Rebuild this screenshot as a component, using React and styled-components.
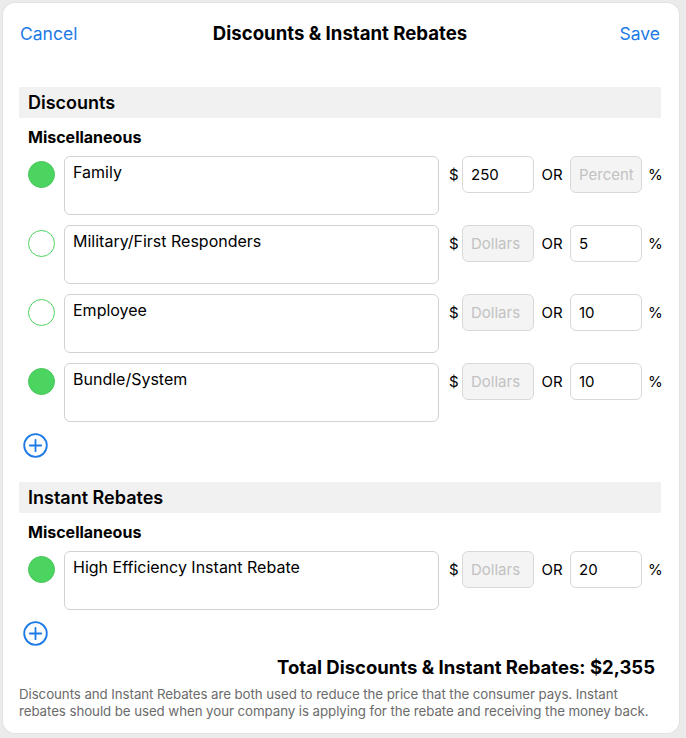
import React from 'react'
import styled, { createGlobalStyle } from 'styled-components'

const GlobalStyle = createGlobalStyle`
  body {
    margin: 0;
    background: #ebebeb;
    font-family: Inter, "Liberation Sans", sans-serif;
    color: #000;
  }
`

const discounts = [
    { name: 'Family', on: true, dollars: '250', percent: '' },
    { name: 'Military/First Responders', on: false, dollars: '', percent: '5' },
    { name: 'Employee', on: false, dollars: '', percent: '10' },
    { name: 'Bundle/System', on: true, dollars: '', percent: '10' },
]

const rebates = [
    { name: 'High Efficiency Instant Rebate', on: true, dollars: '', percent: '20' },
]

function PlusIcon() {
    return (
        <svg width="25" height="25" viewBox="0 0 25 25">
            <circle cx="12.5" cy="12.5" r="11.3" fill="none" stroke="#1c7be6" strokeWidth="1.8" />
            <path d="M12.5 6.8v11.4M6.8 12.5h11.4" stroke="#1c7be6" strokeWidth="1.8" strokeLinecap="round" />
        </svg>
    )
}

function ItemRow({ item }) {
    return (
        <Row>
            <Lead>
                <Dot on={item.on} />
            </Lead>
            <NameBox>{item.name}</NameBox>
            <Amounts>
                <Dollar>$</Dollar>
                <Field filled={item.dollars !== ''}>{item.dollars || 'Dollars'}</Field>
                <Or>OR</Or>
                <Field filled={item.percent !== ''}>{item.percent || 'Percent'}</Field>
                <Percent>%</Percent>
            </Amounts>
        </Row>
    )
}

function Section({ title, items }) {
    return (
        <>
            <Band>{title}</Band>
            <Group>Miscellaneous</Group>
            <Rows>
                {items.map((item) => <ItemRow key={item.name} item={item} />)}
            </Rows>
            <AddButton><PlusIcon /></AddButton>
        </>
    )
}

function App() {
    return (
        <Page>
            <GlobalStyle />
            <Card>
                <Nav>
                    <NavLink>Cancel</NavLink>
                    <Title>Discounts &amp; Instant Rebates</Title>
                    <NavLink right>Save</NavLink>
                </Nav>
                <Section title="Discounts" items={discounts} />
                <Spacer />
                <Section title="Instant Rebates" items={rebates} />
                <Total>Total Discounts &amp; Instant Rebates: $2,355</Total>
                <Note>
                    Discounts and Instant Rebates are both used to reduce the price that the consumer pays. Instant
                    rebates should be used when your company is applying for the rebate and receiving the money back.
                </Note>
            </Card>
        </Page>
    )
}

const Page = styled.div`
    width: 686px;
    height: 738px;
    padding: 3px 7px 5px 3px;
    box-sizing: border-box;
`

const Card = styled.div`
    background: #fff;
    border-radius: 12px;
    height: 100%;
    box-sizing: border-box;
    padding: 0 18px 0 16px;
    display: flex;
    flex-direction: column;
    box-shadow: 0 0 0 1px #e2e2e2;
`

const Nav = styled.div`
    height: 60px;
    display: grid;
    grid-template-columns: 1fr auto 1fr;
    align-items: center;
    margin-bottom: 24px;
`

const NavLink = styled.div`
    font-size: 17.5px;
    color: #1c7be6;
    padding: 0 1px;
    text-align: ${(p) => (p.right ? 'right' : 'left')};
`

const Title = styled.div`
    font-size: 18.6px;
    font-weight: 700;
`

const Band = styled.div`
    background: #f1f1f1;
    height: 31px;
    display: flex;
    align-items: center;
    padding-left: 9px;
    font-size: 18px;
    font-weight: 600;
`

const Group = styled.div`
    font-size: 16px;
    font-weight: 700;
    line-height: 20px;
    padding: 9px 0 0 9px;
    margin-bottom: 9px;
`

const Rows = styled.div`
    display: flex;
    flex-direction: column;
    gap: 10px;
`

const Row = styled.div`
    display: flex;
    align-items: flex-start;
`

const Lead = styled.div`
    width: 45px;
    height: 37px;
    flex-shrink: 0;
    display: flex;
    align-items: center;
    padding-left: 9px;
    box-sizing: border-box;
`

const Dot = styled.div`
    width: 27px;
    height: 27px;
    border-radius: 50%;
    box-sizing: border-box;
    background: ${(p) => (p.on ? '#4cd460' : '#fff')};
    border: 1px solid ${(p) => (p.on ? '#44c558' : '#4cd460')};
`

const NameBox = styled.div`
    width: 375px;
    height: 59px;
    flex-shrink: 0;
    box-sizing: border-box;
    border: 1px solid #d2d2d2;
    border-radius: 6px;
    padding: 5px 8px;
    font-size: 16px;
    line-height: 20px;
`

const Amounts = styled.div`
    display: flex;
    align-items: center;
    height: 37px;
    margin-left: 10px;
`

const Dollar = styled.span`
    font-size: 15px;
    width: 13px;
    flex-shrink: 0;
`

const Percent = styled.span`
    font-size: 15px;
    margin-left: 6px;
    width: 12px;
    flex-shrink: 0;
`

const Field = styled.div`
    width: 72px;
    height: 37px;
    flex-shrink: 0;
    box-sizing: border-box;
    border: 1px solid #d8d8d8;
    border-radius: 6px;
    display: flex;
    align-items: center;
    padding-left: 8px;
    font-size: 15px;
    background: ${(p) => (p.filled ? '#fff' : '#f4f4f4')};
    color: ${(p) => (p.filled ? '#000' : '#c2c2c2')};
`

const Or = styled.span`
    font-size: 15px;
    width: 36px;
    flex-shrink: 0;
    text-align: center;
`

const AddButton = styled.div`
    display: flex;
    padding-left: 4px;
    margin-top: 11px;
`

const Spacer = styled.div`
    height: 24px;
`

const Total = styled.div`
    margin-top: 9px;
    font-size: 18.5px;
    font-weight: 700;
    text-align: right;
    padding-right: 6px;
    line-height: 24px;
`

const Note = styled.div`
    margin-top: 7px;
    font-size: 13.3px;
    line-height: 17px;
    color: #6b6b6b;
    letter-spacing: -0.07px;
`

export default App
